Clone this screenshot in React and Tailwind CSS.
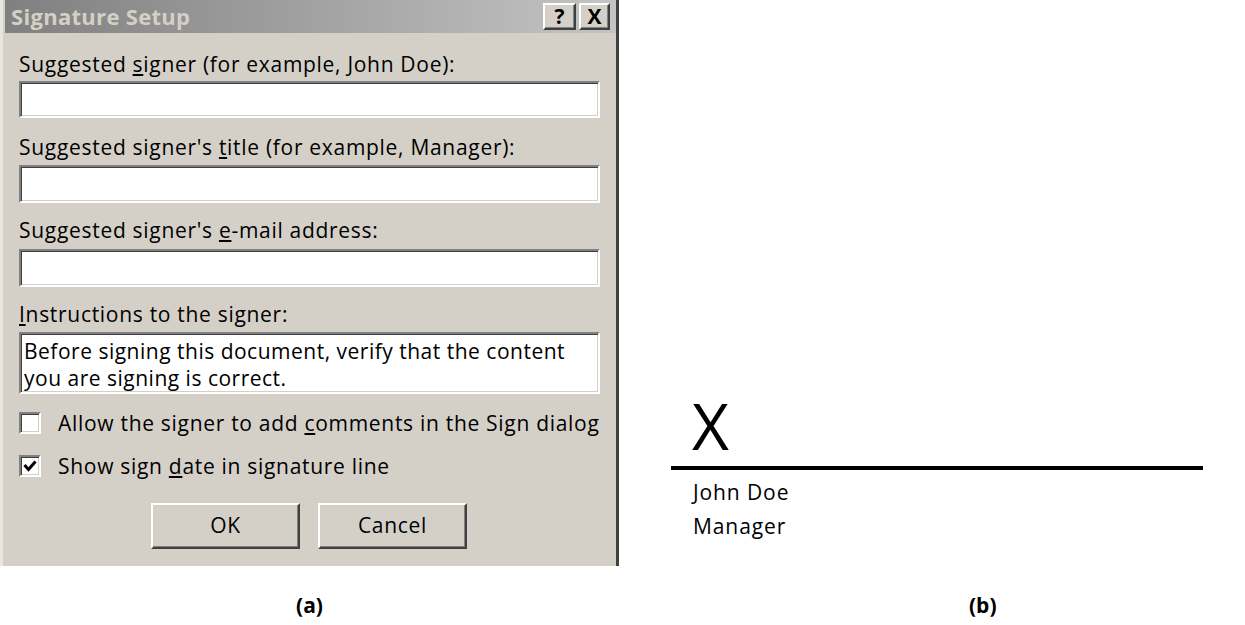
import React from 'react';

const sunken = "bg-white border-2 border-t-[#808080] border-l-[#808080] border-b-white border-r-white shadow-[inset_1px_1px_0_#404040,inset_-1px_-1px_0_#d4d0c8]";
const raised = "bg-[#d4d0c8] border-2 border-t-white border-l-white border-b-[#404040] border-r-[#404040] shadow-[inset_-1px_-1px_0_#808080]";

const Label = ({ children, className = '' }) => (
  <div className={`h-[24px] leading-[24px] text-[21px] text-black whitespace-nowrap ${className}`}>{children}</div>
);

const Check = ({ checked }) => (
  <div className={`w-[22px] h-[22px] shrink-0 flex items-center justify-center ${sunken}`}>
    {checked && (
      <svg width="14" height="14" viewBox="0 0 14 14">
        <path d="M1.5 6 L5.5 10.5 L12.5 2.5" stroke="#000" strokeWidth="3" fill="none" />
      </svg>
    )}
  </div>
);

const App = () => {
  return (
    <div className="w-[1245px] h-[625px] bg-white flex flex-col font-['Open_Sans',sans-serif] overflow-hidden">
      <div className="flex">
        {/* DIALOG (a) */}
        <div className="w-[619px] h-[566px] bg-[#d4d0c8] border-l-[3px] border-l-[#e8e6e0] border-r-[3px] border-r-[#404040] flex flex-col">
          <div className="h-[33px] ml-[2px] bg-gradient-to-r from-[#808080] to-[#c4c4c4] flex items-center justify-between pl-[6px] pr-[6px]">
            <span className="text-[22px] font-bold text-[#d4d0c8] tracking-[0.3px]">Signature Setup</span>
            <div className="flex gap-[3px]">
              <div className={`w-[33px] h-[27px] flex items-center justify-center text-[21px] font-bold leading-none ${raised}`}>?</div>
              <div className={`w-[31px] h-[27px] flex items-center justify-center text-[21px] font-bold leading-none ${raised}`}>X</div>
            </div>
          </div>

          <div className="pl-[16px] flex flex-col tracking-[0.7px]">
            <Label className="mt-[19px]">Suggested <u>s</u>igner (for example, John Doe):</Label>
            <div className={`mt-[5px] w-[581px] h-[37px] ${sunken}`} />

            <Label className="mt-[17px]">Suggested signer's <u>t</u>itle (for example, Manager):</Label>
            <div className={`mt-[6px] w-[581px] h-[38px] ${sunken}`} />

            <Label className="mt-[15px]">Suggested signer's <u>e</u>-mail address:</Label>
            <div className={`mt-[7px] w-[581px] h-[38px] ${sunken}`} />

            <Label className="mt-[15px]"><u>I</u>nstructions to the signer:</Label>
            <div className={`mt-[6px] w-[581px] h-[62px] px-[3px] pt-[4px] text-[21px] leading-[27px] tracking-[0.5px] whitespace-nowrap ${sunken}`}>
              Before signing this document, verify that the content<br />you are signing is correct.
            </div>

            <div className="mt-[17px] flex items-center gap-[17px]">
              <Check />
              <Label>Allow the signer to add <u>c</u>omments in the Sign dialog</Label>
            </div>
            <div className="mt-[19px] flex items-center gap-[17px]">
              <Check checked />
              <Label>Show sign <u>d</u>ate in signature line</Label>
            </div>

            <div className="mt-[25px] flex gap-[18px] pl-[132px]">
              <div className={`w-[149px] h-[46px] flex items-center justify-center text-[21px] ${raised}`}>OK</div>
              <div className={`w-[149px] h-[46px] flex items-center justify-center text-[21px] ${raised}`}>Cancel</div>
            </div>
          </div>
        </div>

        {/* SIGNATURE LINE (b) */}
        <div className="flex-1 pl-[52px] pt-[394px]">
          <div className="pl-[21px] text-[64px] leading-[64px] text-black font-medium">X</div>
          <div className="mt-[8px] w-[532px] h-[4px] bg-black" />
          <div className="pl-[22px] mt-[5px] text-[21px] leading-[34px] tracking-[0.9px] text-black">
            <div>John Doe</div>
            <div>Manager</div>
          </div>
        </div>
      </div>

      {/* CAPTIONS */}
      <div className="flex mt-[24px] text-[21px] font-bold text-black">
        <div className="w-[619px] text-center">(a)</div>
        <div className="ml-[350px]">(b)</div>
      </div>
    </div>
  );
};

export default App;
